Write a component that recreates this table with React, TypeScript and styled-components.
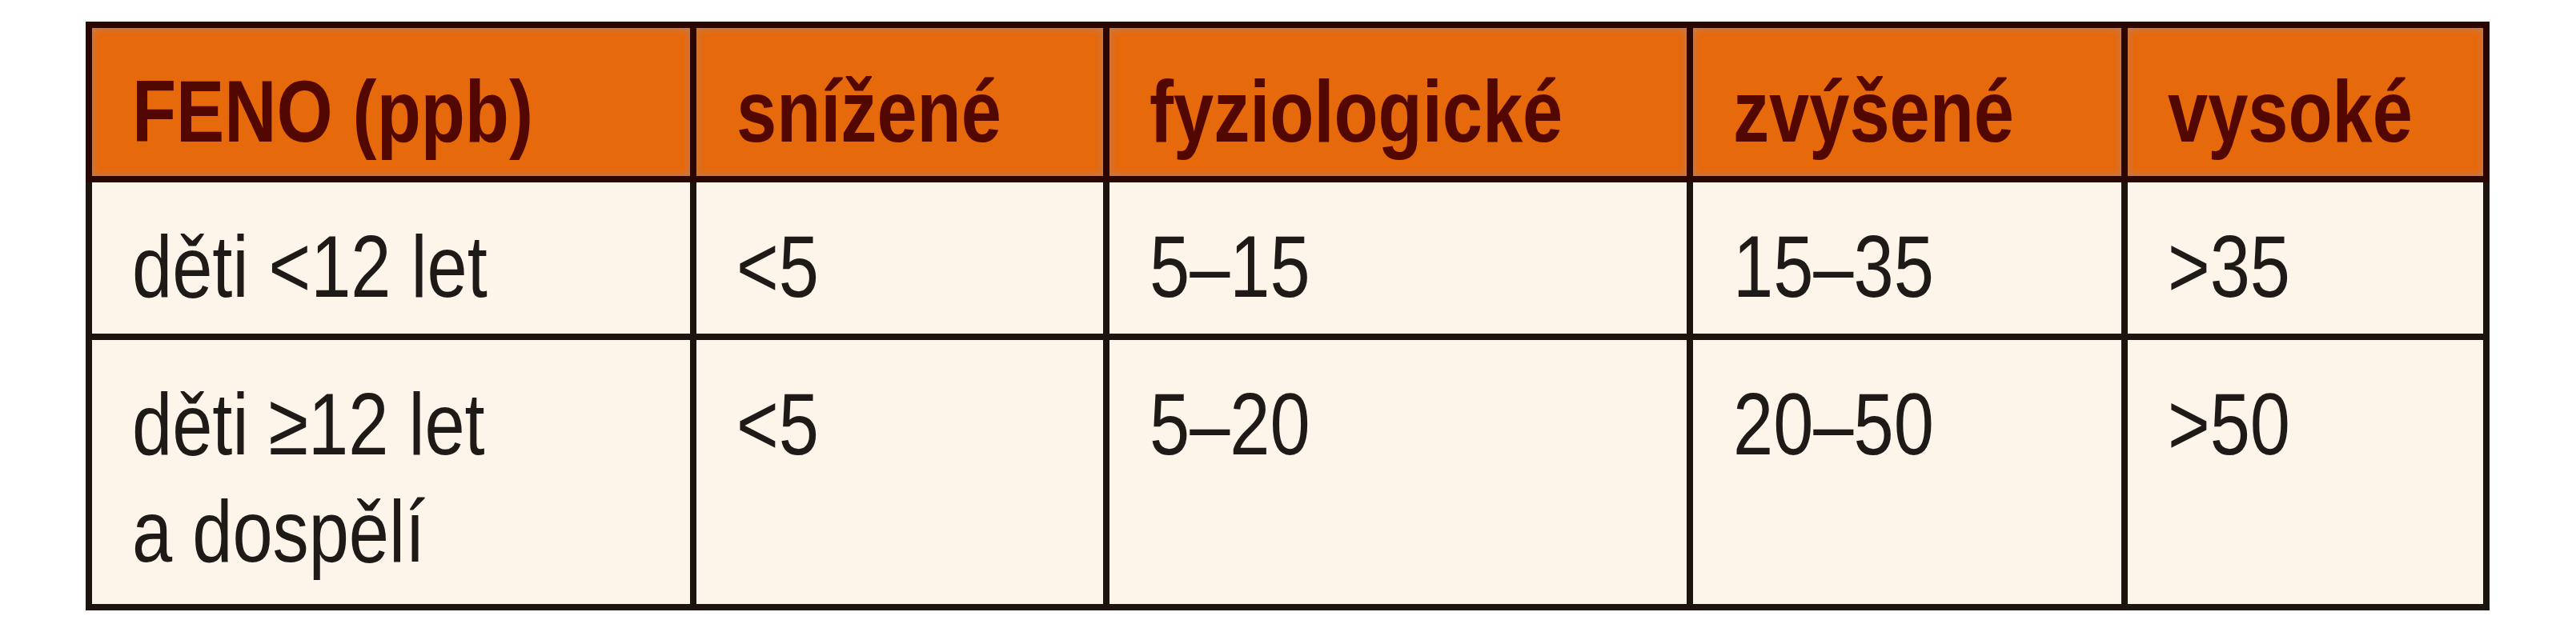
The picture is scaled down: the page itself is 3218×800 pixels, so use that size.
import React from "react";
import styled, { createGlobalStyle } from "styled-components";

const GlobalStyle = createGlobalStyle`
  html, body {
    margin: 0;
    padding: 0;
    background: #ffffff;
  }
  body {
    font-family: "Liberation Sans", Arial, sans-serif;
  }
`;

const COLS = "747px 508px 721px 535px 444px";

const Page = styled.div`
  padding: 27px 0 0 107px;
  width: 3218px;
  height: 800px;
  box-sizing: border-box;
`;

const Table = styled.div`
  display: flex;
  flex-direction: column;
  width: 3003px;
`;

const HeaderRow = styled.div`
  display: grid;
  grid-template-columns: ${COLS};
  column-gap: 8px;
  padding: 8px;
  background: #2a0700;
`;

const BodyRow = styled.div<{ $h: number }>`
  display: grid;
  grid-template-columns: ${COLS};
  grid-template-rows: ${(p) => p.$h}px;
  column-gap: 8px;
  padding: 0 8px 8px 8px;
  background: #1b140f;
`;

const HeadCell = styled.div`
  height: 185px;
  box-sizing: border-box;
  padding: 37px 0 0 50px;
  background: #e6690b;
  box-shadow: inset 0 0 7px 3px rgba(196, 122, 78, 0.85);
  color: #520700;
  font-weight: 700;
  font-size: 110px;
  line-height: 134px;
  white-space: nowrap;
  overflow: hidden;
`;

const Cell = styled.div`
  box-sizing: border-box;
  padding: 38px 0 0 50px;
  background: #fdf4ea;
  color: #1d1a17;
  font-weight: 400;
  font-size: 110px;
  line-height: 134px;
  white-space: nowrap;
  overflow: hidden;
`;

/* condensed face: Arial-width glyphs narrowed to Arial Narrow proportions */
const Narrow = styled.span`
  display: block;
  transform: scaleX(0.82);
  transform-origin: 0 50%;
`;

const headers = ["FENO (ppb)", "snížené", "fyziologické", "zvýšené", "vysoké"];

const rows: { h: number; cells: string[][] }[] = [
  { h: 189, cells: [["děti <12 let"], ["<5"], ["5–15"], ["15–35"], [">35"]] },
  {
    h: 330,
    cells: [["děti ≥12 let", "a dospělí"], ["<5"], ["5–20"], ["20–50"], [">50"]],
  },
];

export default function App() {
  return (
    <>
      <GlobalStyle />
      <Page>
        <Table>
          <HeaderRow>
            {headers.map((h) => (
              <HeadCell key={h}>
                <Narrow>{h}</Narrow>
              </HeadCell>
            ))}
          </HeaderRow>
          {rows.map((r, i) => (
            <BodyRow key={i} $h={r.h}>
              {r.cells.map((lines, j) => (
                <Cell key={j}>
                  {lines.map((l, k) => (
                    <Narrow key={k}>{l}</Narrow>
                  ))}
                </Cell>
              ))}
            </BodyRow>
          ))}
        </Table>
      </Page>
    </>
  );
}
